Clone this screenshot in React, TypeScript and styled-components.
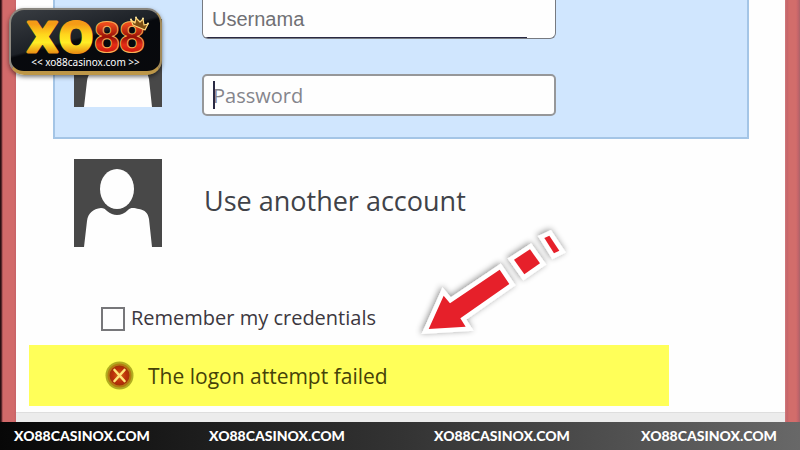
import React from "react";
import styled, { createGlobalStyle } from "styled-components";

const GlobalStyle = createGlobalStyle`
  *, *::before, *::after { box-sizing: border-box; }
  body { margin: 0; background: #fefefe; font-family: "Open Sans", "Noto Sans", sans-serif; }
`;

const Page = styled.div`
  position: relative;
  display: flex;
  flex-direction: column;
  min-height: 100vh;
  overflow: hidden;
`;

const Frame = styled.div`
  display: flex;
  flex: 1;
`;

const Edge = styled.div<{ $side: "left" | "right" }>`
  flex: none;
  width: ${(p) => (p.$side === "left" ? 16 : 15)}px;
  background: ${(p) =>
    p.$side === "left"
      ? "linear-gradient(90deg, #2c1013 0 1px, #8a4145 2px, #d26a6a 3px 14px, #c96568 15px)"
      : "linear-gradient(90deg, #d27a7c 0, #c4646a 2px, #d26d6b 4px 11px, #c4646a 13px, #a86468 15px)"};
`;

const Dialog = styled.main`
  position: relative;
  display: flex;
  flex-direction: column;
  flex: 1;
  min-width: 0;
  background: #fefefe;
`;

const AccountPanel = styled.form`
  display: flex;
  gap: 40px;
  margin: 0 36px 0 37px;
  padding: 0 20px 21px 19px;
  border: 2px solid #a4c5e6;
  border-top: 0;
  background: #d0e6fe;
`;

const PanelAvatar = styled.div`
  display: flex;
  align-items: flex-end;
  padding: 19px 0 9px;
`;

const Fields = styled.div`
  display: flex;
  flex-direction: column;
  gap: 35px;
  flex: 0 1 354px;
`;

const FieldBox = styled.label<{ $kind: "user" | "password" }>`
  position: relative;
  display: block;
  overflow: hidden;
  border: 2px solid ${(p) => (p.$kind === "user" ? "#777a80" : "#969799")};
  border-width: ${(p) => (p.$kind === "user" ? "0 1px 1px" : "2px")};
  border-radius: ${(p) => (p.$kind === "user" ? "0 0 6px 6px" : "5px")};
  background: #fefefe;

  &::after {
    content: "";
    position: absolute;
    background: #292943;
    ${(p) =>
      p.$kind === "user"
        ? "left: 0; bottom: 0; width: 92%; height: 1px;"
        : "left: 9px; top: 5px; width: 2px; height: 28px;"}
  }
`;

const Field = styled.input<{ $kind: "user" | "password" }>`
  display: block;
  width: 100%;
  height: 38px;
  padding: 0 9px;
  border: 0;
  outline: 0;
  background: transparent;
  font-family: ${(p) =>
    p.$kind === "user" ? '"Liberation Sans", sans-serif' : '"Open Sans", sans-serif'};
  font-size: 20px;

  &::placeholder { color: ${(p) => (p.$kind === "user" ? "#707074" : "#85858c")}; opacity: 1; }
`;

const OtherAccount = styled.button`
  display: flex;
  align-items: center;
  gap: 42px;
  margin: 20px 36px 0 58px;
  padding: 0;
  border: 0;
  background: none;
  color: #404248;
  font: 400 27px/32px "Open Sans", sans-serif;
  text-align: left;
`;

const AccountName = styled.span`
  padding-bottom: 4px;
`;

const Remember = styled.label`
  display: flex;
  align-items: center;
  gap: 6px;
  margin: 56px 36px 0 85px;
  color: #3c3840;
  font-size: 20px;
  font-weight: 500;
  line-height: 30px;
`;

const RememberText = styled.span`
  padding-bottom: 2px;
`;

const Checkbox = styled.input`
  appearance: none;
  width: 24px;
  height: 24px;
  margin: 0;
  border: 2px solid #77777a;
  background: #fefefe;
`;

const Alert = styled.div`
  display: flex;
  align-items: center;
  gap: 14px;
  width: calc(100% - 129px);
  height: 61px;
  margin: 10px 0 6px 13px;
  padding-left: 76px;
  background: #ffff59;
  color: #454208;
  font-size: 21px;
  line-height: 30px;
`;

const CommandBar = styled.div`
  flex: 1;
  min-height: 10px;
  border-top: 1px solid #dedede;
  background: #ececec;
`;

const ArrowOverlay = styled.svg`
  position: absolute;
  left: 392px;
  top: 216px;
  width: 170px;
  height: 130px;
`;

const Footer = styled.footer`
  display: grid;
  grid-template-columns: 195fr 225fr 207fr 145fr;
  height: 28px;
  padding: 0 14px;
  align-items: center;
  background: linear-gradient(90deg, #070707, #333 50%, #686868);
`;

const SiteLink = styled.a`
  color: #fff;
  font: 900 14px/28px Lato, sans-serif;
  text-decoration: none;
  white-space: nowrap;
`;

const Badge = styled.a`
  position: absolute;
  left: 9px;
  top: 8px;
  width: 153px;
  height: 67px;
  border: 2px solid #a89b80;
  border-color: #88857e #a28a59 #bd9748 #8e8980;
  border-bottom-width: 4px;
  border-radius: 15px;
  background: linear-gradient(165deg, #393d42 0, #1c2026 45%, #07090d 48%, #08090c);
  box-shadow: 0 2px 4px rgba(0, 0, 0, 0.5);
  color: #fff;
  text-align: center;
  text-decoration: none;
`;

const BadgeArt = styled.svg`
  display: block;
  width: 149px;
  height: 45px;
  overflow: visible;
`;

const BadgeCaption = styled.span`
  display: block;
  font: 400 10px/14px "Noto Sans", sans-serif;
  white-space: nowrap;
`;

const Avatar = () => (
  <svg width="88" height="88" viewBox="0 0 88 88" aria-hidden="true" display="block">
    <path fill="#484848" d="M0 0h88v88H0z" />
    <ellipse cx="43" cy="30" rx="17" ry="20" fill="#fefefe" />
    <path
      fill="#fefefe"
      d="M10 88 L13 62 C14 54 19 50 27 49 C30 49 31 50 33 52 C40 58 48 57 54 51 C57 48 60 49 65 50 C71 51 74 54 75 60 L78 88 Z"
    />
  </svg>
);

const ErrorIcon = () => (
  <svg width="29" height="29" viewBox="0 0 29 29" aria-hidden="true">
    <defs>
      <radialGradient id="errorFill">
        <stop offset="0" stopColor="#d26b13" />
        <stop offset=".6" stopColor="#bd300a" />
        <stop offset="1" stopColor="#9a3208" />
      </radialGradient>
    </defs>
    <circle cx="14.5" cy="14.5" r="14" fill="#b2ad21" />
    <circle cx="14.5" cy="14.5" r="11" fill="url(#errorFill)" stroke="#b57b12" strokeWidth="2" />
    <path d="m9.500 9 10 11m0-11-10 11" stroke="#ffe477" strokeWidth="2.600" strokeLinecap="round" />
  </svg>
);

const arrowParts = [
  "86,357 131,257 150,280 299,179 328,222 181,325 197,350",
  "342,149 390,118 420,160 373,193",
  "433,84 448,77 478,122 462,130",
];

const Arrow = () => (
  <ArrowOverlay viewBox="24 18 510 390" aria-hidden="true">
    <defs>
      <filter id="arrowShadow" x="-20%" y="-20%" width="140%" height="140%">
        <feDropShadow dx="-3" dy="-3" stdDeviation="9" floodColor="#000" floodOpacity=".45" />
      </filter>
    </defs>
    <g filter="url(#arrowShadow)">
      {arrowParts.map((points) => (
        <polygon key={points} points={points} fill="#fff" stroke="#fff" strokeWidth="27" />
      ))}
    </g>
    {arrowParts.map((points) => (
      <polygon key={points} points={points} fill="#e6202a" />
    ))}
  </ArrowOverlay>
);

const Logo = () => (
  <Badge href="#" aria-label="XO88 casino">
    <BadgeArt viewBox="0 0 149 45">
      <defs>
        <linearGradient id="gold" x1="0" y1="0" x2="0" y2="1">
          <stop offset=".2" stopColor="#f59b16" />
          <stop offset=".42" stopColor="#ffd51c" />
          <stop offset=".6" stopColor="#ffee25" />
          <stop offset=".85" stopColor="#e88712" />
        </linearGradient>
        <linearGradient id="red" x1="0" y1="0" x2="0" y2="1">
          <stop offset=".2" stopColor="#ec4a1c" />
          <stop offset=".48" stopColor="#971006" />
          <stop offset=".65" stopColor="#e52d15" />
          <stop offset=".85" stopColor="#c5120b" />
        </linearGradient>
      </defs>
      <g fontFamily="DejaVu Sans, sans-serif" fontWeight="700" fontSize="40" strokeLinejoin="round">
        <text x="16" y="42" fill="url(#gold)" stroke="url(#gold)" strokeWidth="3">X</text>
        <text x="48" y="42" fill="url(#gold)" stroke="url(#gold)" strokeWidth="3">O</text>
        <text x="82" y="42" fill="url(#red)" stroke="#f5ae55" strokeWidth="1">8</text>
        <text x="107" y="42" fill="url(#red)" stroke="#f5ae55" strokeWidth="1">8</text>
      </g>
      <path
        d="m120 10 4 3 1-5 4 4 3-3 1 6 4-1-3 6-12-5z"
        fill="#7b4e14"
        stroke="#ffd779"
        strokeWidth="1.200"
        strokeLinejoin="round"
      />
      <g fill="#ffe8a0">
        <circle cx="120" cy="9.500" r="1" />
        <circle cx="125" cy="7.500" r="1" />
        <circle cx="132" cy="8.500" r="1" />
        <circle cx="137" cy="13.500" r="1" />
      </g>
    </BadgeArt>
    <BadgeCaption>&lt;&lt; xo88casinox.com &gt;&gt;</BadgeCaption>
  </Badge>
);

export default function App() {
  return (
    <>
      <GlobalStyle />
      <Page>
        <Frame>
          <Edge $side="left" />
          <Dialog>
            <AccountPanel>
              <PanelAvatar>
                <Avatar />
              </PanelAvatar>
              <Fields>
                <FieldBox $kind="user">
                  <Field $kind="user" type="text" placeholder="Usernama" aria-label="Usernama" />
                </FieldBox>
                <FieldBox $kind="password">
                  <Field $kind="password" type="password" placeholder="Password" aria-label="Password" />
                </FieldBox>
              </Fields>
            </AccountPanel>
            <OtherAccount type="button">
              <Avatar />
              <AccountName>Use another account</AccountName>
            </OtherAccount>
            <Remember>
              <Checkbox type="checkbox" />
              <RememberText>Remember my credentials</RememberText>
            </Remember>
            <Alert role="alert">
              <ErrorIcon />
              The logon attempt failed
            </Alert>
            <CommandBar />
            <Arrow />
          </Dialog>
          <Edge $side="right" />
        </Frame>
        <Footer>
          {[0, 1, 2, 3].map((n) => (
            <SiteLink key={n} href="#">
              XO88CASINOX.COM
            </SiteLink>
          ))}
        </Footer>
        <Logo />
      </Page>
    </>
  );
}
